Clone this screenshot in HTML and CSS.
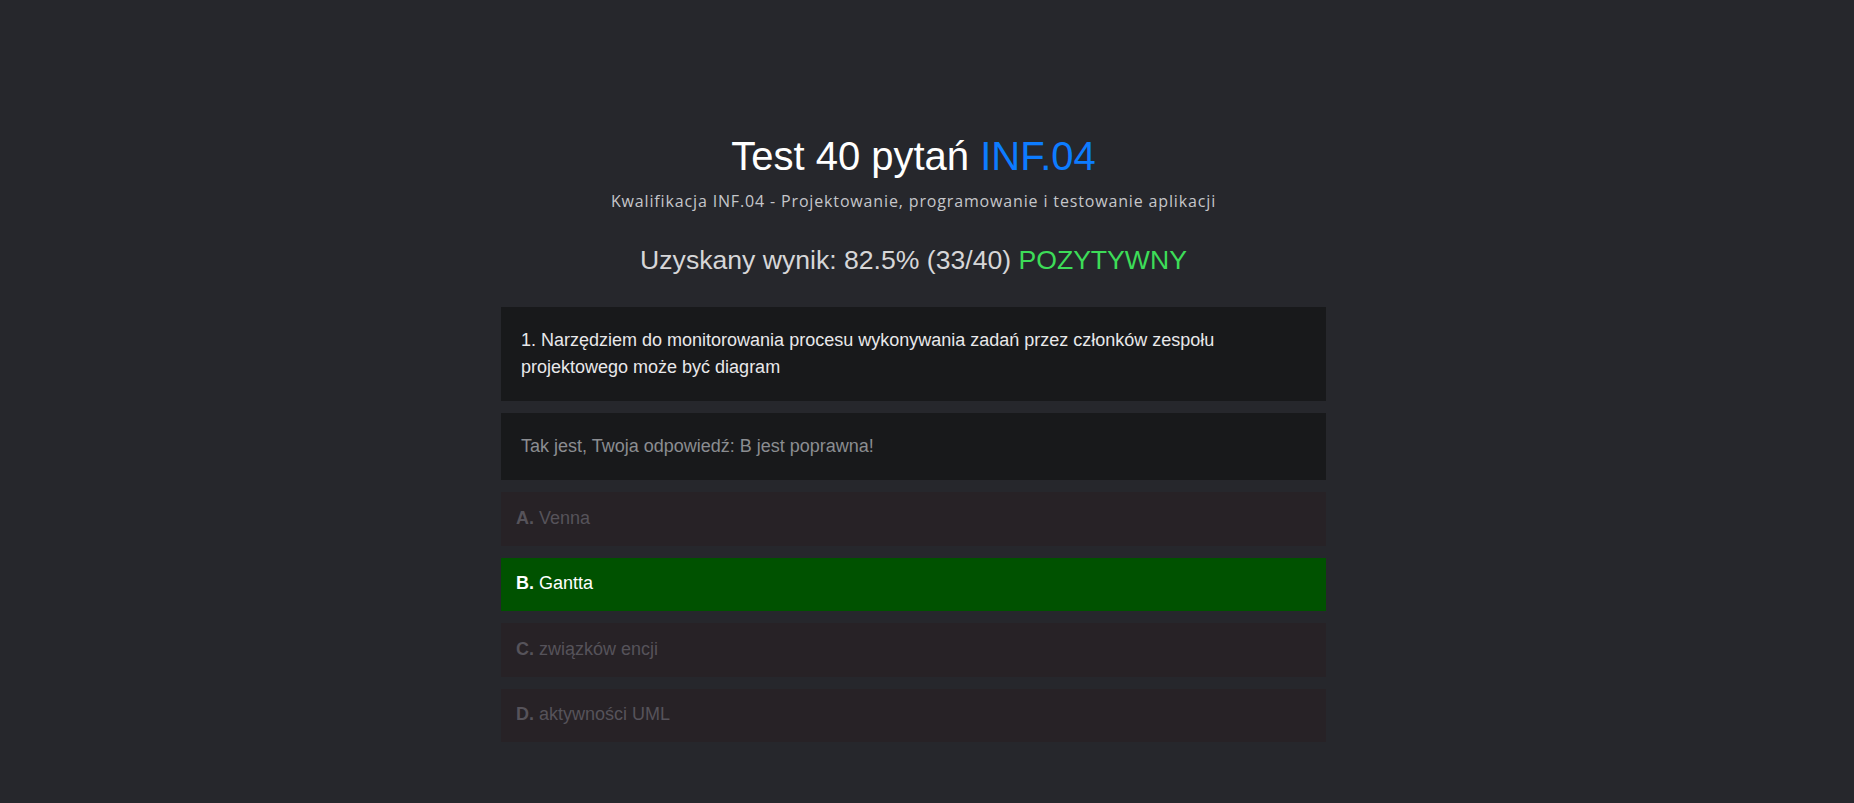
FILE: index.html
```html
<!DOCTYPE html>
<html lang="pl">
<head>
<meta charset="utf-8">
<title>Test 40 pytań INF.04</title>
<link rel="stylesheet" href="styles.css">
</head>
<body>
<main class="quiz">
  <header class="quiz-header">
    <h1 class="title">Test 40 pytań <span class="accent">INF.04</span></h1>
    <p class="subtitle">Kwalifikacja INF.04 - Projektowanie, programowanie i testowanie aplikacji</p>
    <h2 class="score">Uzyskany wynik: 82.5% (33/40) <span class="pass">POZYTYWNY</span></h2>
  </header>
  <section class="question">
    <div class="panel question-text">1. Narzędziem do monitorowania procesu wykonywania zadań przez członków zespołu projektowego może być diagram</div>
    <div class="panel feedback">Tak jest, Twoja odpowiedź: B jest poprawna!</div>
    <ul class="answers">
      <li class="answer"><b>A.</b> Venna</li>
      <li class="answer correct"><b>B.</b> Gantta</li>
      <li class="answer"><b>C.</b> związków encji</li>
      <li class="answer"><b>D.</b> aktywności UML</li>
    </ul>
  </section>
</main>
</body>
</html>
```
FILE: styles.css
```css
html, body {
  margin: 0;
  padding: 0;
  background: #26272c;
}
body {
  font-family: "Liberation Sans", Arial, sans-serif;
  color: #e6e6e6;
  padding: 132px 27px 40px 0;
}
.quiz {
  width: 825px;
  margin: 0 auto;
}
.quiz-header {
  display: flex;
  flex-direction: column;
  align-items: center;
  text-align: center;
}
.title {
  margin: 0;
  font-size: 40px;
  line-height: 48px;
  font-weight: 400;
  color: #ffffff;
}
.accent {
  color: #0d7cff;
}
.subtitle {
  margin: 10px 0 0;
  font-family: "Open Sans", "Noto Sans", sans-serif;
  font-size: 16px;
  letter-spacing: 0.85px;
  line-height: 22px;
  color: #c5c6ca;
}
.score {
  margin: 32px 0 0;
  font-size: 26.6px;
  line-height: 32px;
  font-weight: 400;
  color: #d6d6d8;
}
.pass {
  color: #3ddc58;
}
.question {
  margin-top: 31px;
  display: flex;
  flex-direction: column;
  gap: 12px;
}
.panel {
  background: #18191b;
  padding: 20px 20px;
  font-size: 18px;
  line-height: 27px;
}
.question-text {
  color: #e8e8ea;
}
.feedback {
  color: #8b8d91;
}
.answers {
  list-style: none;
  margin: 0;
  padding: 0;
  display: flex;
  flex-direction: column;
  gap: 12px;
}
.answer {
  background: #272226;
  color: #56535a;
  padding: 14.5px 15px 15.5px;
  font-size: 18px;
  line-height: 23.5px;
}
.answer b {
  font-weight: 700;
}
.answer.correct {
  background: #005200;
  color: #ffffff;
}
```
